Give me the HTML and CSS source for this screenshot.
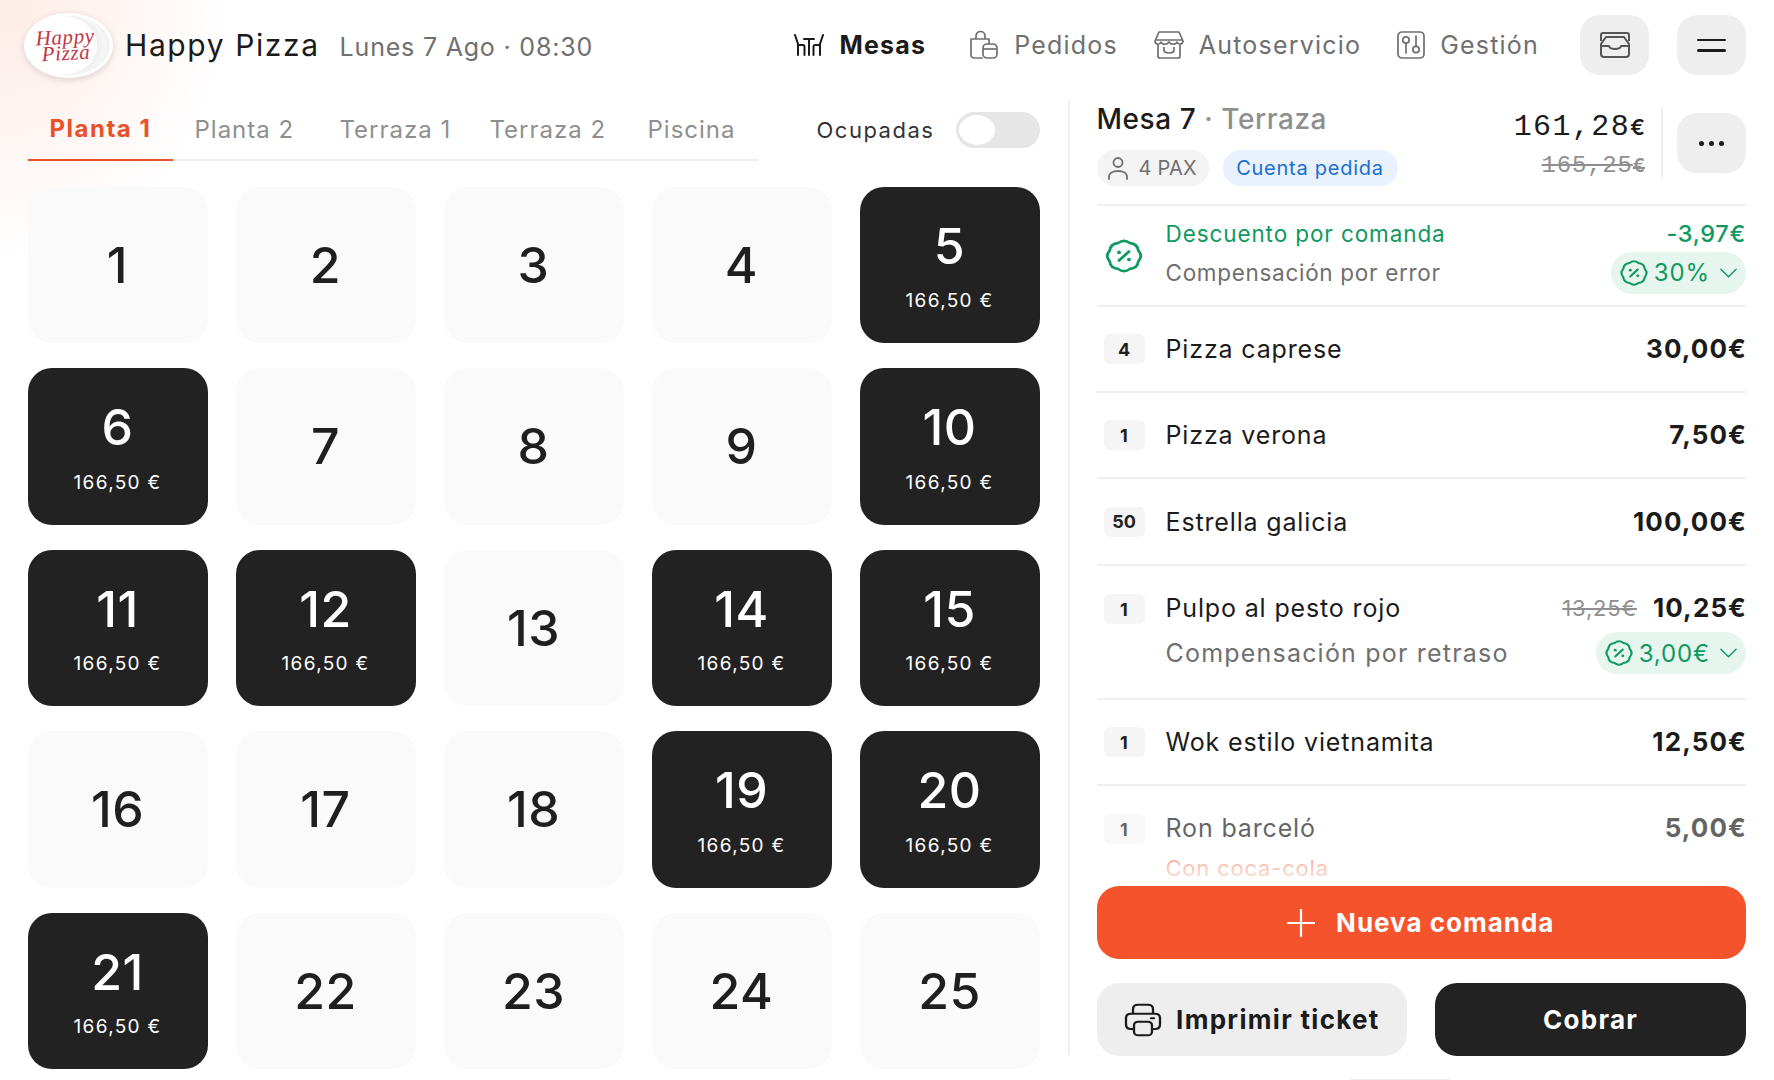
FILE: index.html
```html
<!DOCTYPE html>
<html lang="es">
<head>
<meta charset="utf-8">
<title>Happy Pizza</title>
<link rel="stylesheet" href="styles.css">
</head>
<body>
<svg class="defs" width="0" height="0" aria-hidden="true">
  <symbol id="pct" viewBox="0 0 24 24" preserveAspectRatio="none"><path d="M20.59 8.44Q23.5 12 20.59 15.56Q20.13 20.13 15.56 20.59Q12 23.5 8.44 20.59Q3.87 20.13 3.41 15.56Q.5 12 3.41 8.44Q3.87 3.87 8.44 3.41Q12 .5 15.56 3.41Q20.13 3.87 20.59 8.44Z" fill="none" stroke="currentColor" stroke-width="1.700"/><path d="M15 9L9 15" fill="none" stroke="currentColor" stroke-width="1.700" stroke-linecap="round"/><circle cx="9" cy="9.600" r="1.200" fill="currentColor"/><circle cx="15" cy="14.400" r="1.200" fill="currentColor"/></symbol>
  <symbol id="chev" viewBox="0 0 20 12"><path d="M2 2l8 8 8-8" fill="none" stroke="currentColor" stroke-width="1.500" stroke-linecap="round" stroke-linejoin="round"/></symbol>
</svg>
<div class="app">
  <header class="top">
    <div class="logo"><div class="disc"><span class="script">Happy<br>Pizza</span></div></div>
    <div class="brand">Happy Pizza</div>
    <div class="date">Lunes 7 Ago · 08:30</div>
    <nav class="nav">
      <a class="nav-item active">
        <svg class="ico-table" viewBox="0 0 32 22"><path d="M2 1l3 9v11M5 11h5c1 0 1.500 1 1.500 2v8M11 5h10M16 5v16M30 1l-3 9v11M27 11h-5c-1 0-1.500 1-1.500 2v8" fill="none" stroke="currentColor" stroke-width="2" stroke-linecap="round"/></svg>
        <span>Mesas</span>
      </a>
      <a class="nav-item">
        <svg class="ico-bag" viewBox="0 0 30 30"><path d="M13 28H5c-1.500 0-3-1.200-3-3V9h18v5M7 9V6c0-6 9-6 9 0v3" fill="none" stroke="currentColor" stroke-width="1.700" stroke-linecap="round" stroke-linejoin="round"/><rect x="14" y="14" width="14" height="14" rx="4" fill="none" stroke="currentColor" stroke-width="1.700"/><path d="M14 19h14" stroke="currentColor" stroke-width="1.700"/></svg>
        <span>Pedidos</span>
      </a>
      <a class="nav-item">
        <svg class="ico-store" viewBox="0 0 30 28"><path d="M5 1h20l4 9c0 4-5 4-6 1-1 3-6 3-8 0-2 3-7 3-8 0-1 3-6 3-6-1zM4 14v11c0 1 1 2 2 2h18c1 0 2-1 2-2V14M10 16v3c0 4 10 4 10 0v-3M1 9h28" fill="none" stroke="currentColor" stroke-width="1.700" stroke-linejoin="round"/></svg>
        <span>Autoservicio</span>
      </a>
      <a class="nav-item">
        <svg class="ico-tune" viewBox="0 0 28 28"><rect x="1" y="1" width="26" height="26" rx="4" fill="none" stroke="currentColor" stroke-width="1.700"/><circle cx="9" cy="9" r="3.200" fill="none" stroke="currentColor" stroke-width="1.700"/><path d="M9 12v10M19 5v10" stroke="currentColor" stroke-width="1.700" stroke-linecap="round"/><circle cx="19" cy="18.500" r="3.200" fill="none" stroke="currentColor" stroke-width="1.700"/></svg>
        <span>Gestión</span>
      </a>
    </nav>
    <button class="square tray" aria-label="Bandeja">
      <svg viewBox="0 0 34 26"><path d="M3 9V3c0-1 1-2 2-2h24c1 0 2 1 2 2v6M8 5h18l5 7v10c0 2-1 3-3 3H6c-2 0-3-1-3-3V12zM3 14h8c1 4 11 4 12 0h8" fill="none" stroke="currentColor" stroke-width="2" stroke-linejoin="round"/></svg>
    </button>
    <button class="square burger" aria-label="Menú"><i></i><i></i></button>
  </header>

  <main class="main">
    <section class="floor">
      <div class="tabbar">
        <div class="tabs">
          <a class="tab on">Planta 1</a>
          <a class="tab">Planta 2</a>
          <a class="tab">Terraza 1</a>
          <a class="tab">Terraza 2</a>
          <a class="tab">Piscina</a>
        </div>
        <div class="filter"><span>Ocupadas</span><div class="switch"><i></i></div></div>
      </div>
      <div class="grid">
        <div class="tile"><b>1</b></div>
        <div class="tile"><b>2</b></div>
        <div class="tile"><b>3</b></div>
        <div class="tile"><b>4</b></div>
        <div class="tile busy"><b>5</b><small>166,50 €</small></div>
        <div class="tile busy"><b>6</b><small>166,50 €</small></div>
        <div class="tile"><b>7</b></div>
        <div class="tile"><b>8</b></div>
        <div class="tile"><b>9</b></div>
        <div class="tile busy"><b>10</b><small>166,50 €</small></div>
        <div class="tile busy"><b>11</b><small>166,50 €</small></div>
        <div class="tile busy"><b>12</b><small>166,50 €</small></div>
        <div class="tile"><b>13</b></div>
        <div class="tile busy"><b>14</b><small>166,50 €</small></div>
        <div class="tile busy"><b>15</b><small>166,50 €</small></div>
        <div class="tile"><b>16</b></div>
        <div class="tile"><b>17</b></div>
        <div class="tile"><b>18</b></div>
        <div class="tile busy"><b>19</b><small>166,50 €</small></div>
        <div class="tile busy"><b>20</b><small>166,50 €</small></div>
        <div class="tile busy"><b>21</b><small>166,50 €</small></div>
        <div class="tile"><b>22</b></div>
        <div class="tile"><b>23</b></div>
        <div class="tile"><b>24</b></div>
        <div class="tile"><b>25</b></div>
      </div>
    </section>
    <div class="vline"></div>
    <aside class="panel">
      <div class="head">
        <div class="head-left">
          <div class="title">Mesa 7 <span>· Terraza</span></div>
          <div class="chips">
            <span class="chip pax"><svg viewBox="0 0 22 24"><circle cx="11" cy="6.500" r="4.500" fill="none" stroke="currentColor" stroke-width="1.800"/><path d="M2 23v-2c0-4 4-6 9-6s9 2 9 6v2" fill="none" stroke="currentColor" stroke-width="1.800" stroke-linecap="round"/></svg>4 PAX</span>
            <span class="chip status">Cuenta pedida</span>
          </div>
        </div>
        <div class="totals">
          <div class="now">161,28<em>€</em></div>
          <div class="was">165,25<em>€</em></div>
        </div>
        <button class="square more" aria-label="Más"><i></i><i></i><i></i></button>
      </div>
      <div class="list">
        <div class="row discount">
          <svg class="badge"><use href="#pct"/></svg>
          <div class="lines">
            <div class="line"><span class="green">Descuento por comanda</span><span class="green amount">-3,97€</span></div>
            <div class="line"><span class="muted">Compensación por error</span><span class="pill"><svg class="pill-pct"><use href="#pct"/></svg>30%<svg class="pill-chev"><use href="#chev"/></svg></span></div>
          </div>
        </div>
        <div class="row item"><span class="qty">4</span><span class="name">Pizza caprese</span><span class="price">30,00€</span></div>
        <div class="row item"><span class="qty">1</span><span class="name">Pizza verona</span><span class="price">7,50€</span></div>
        <div class="row item tall-fix"><span class="qty">50</span><span class="name">Estrella galicia</span><span class="price">100,00€</span></div>
        <div class="row item double">
          <span class="qty">1</span>
          <div class="lines">
            <div class="line"><span class="name">Pulpo al pesto rojo</span><span class="price"><s>13,25€</s>10,25€</span></div>
            <div class="line"><span class="muted">Compensación por retraso</span><span class="pill"><svg class="pill-pct"><use href="#pct"/></svg>3,00€<svg class="pill-chev"><use href="#chev"/></svg></span></div>
          </div>
        </div>
        <div class="row item"><span class="qty">1</span><span class="name">Wok estilo vietnamita</span><span class="price">12,50€</span></div>
        <div class="row item last">
          <span class="qty">1</span>
          <div class="lines">
            <div class="line"><span class="name">Ron barceló</span><span class="price">5,00€</span></div>
            <div class="line"><span class="note">Con coca-cola</span></div>
          </div>
        </div>
      </div>
      <button class="cta"><svg viewBox="0 0 28 28"><path d="M14 1v26M1 14h26" stroke="currentColor" stroke-width="2.200" stroke-linecap="round"/></svg>Nueva comanda</button>
      <div class="pair">
        <button class="btn print"><svg viewBox="0 0 38 38" preserveAspectRatio="none"><path d="M9 12V7c0-3 2-5 5-5h10c3 0 5 2 5 5v5M9 29H7c-3 0-5-2-5-5v-7c0-3 2-5 5-5h24c3 0 5 2 5 5v7c0 3-2 5-5 5h-2" fill="none" stroke="currentColor" stroke-width="2.300" stroke-linecap="round"/><rect x="10" y="21" width="18" height="15" rx="4" fill="none" stroke="currentColor" stroke-width="2.300"/><path d="M27 17h3" stroke="currentColor" stroke-width="2.300" stroke-linecap="round"/></svg>Imprimir ticket</button>
        <button class="btn pay">Cobrar</button>
      </div>
    </aside>
  </main>
</div>
</body>
</html>
```
FILE: styles.css
```css
* { box-sizing: border-box; }
html, body { margin: 0; padding: 0; }
body {
  width: 1774px;
  height: 1080px;
  overflow: hidden;
  position: relative;
  font-family: Inter, "Noto Sans", sans-serif;
  color: #1f1f1f;
  background:
    radial-gradient(ellipse 230px 260px at 0 0, #fdece7 0%, #fef4f1 45%, rgba(255,255,255,0) 100%),
    #fff;
}
body::after { content: ""; position: absolute; left: 1350px; bottom: 0; width: 100px; height: 1px; background: #ececec; }
.defs { position: absolute; }
.app { display: flex; flex-direction: column; height: 1080px; }

/* Header */
.top { display: flex; align-items: center; height: 90px; padding: 0 28px 0 24px; flex: none; }
.logo { width: 89px; height: 65px; margin-right: 12px; padding: 0; border-radius: 50%; background: #fff; box-shadow: 0 2px 7px rgba(0,0,0,.14); display: flex; overflow: hidden; border: 3px solid #fff; flex: none; }
.disc { width: 70px; height: 59px; border-radius: 50%; background: #fff; box-shadow: 5px 0 0 #f1f1f1, 10px 0 0 #f5f5f5, 15px 0 0 #f1f1f1; display: flex; align-items: center; justify-content: center; }
.script { font: italic 21px/16px "Liberation Serif", serif; color: #bf3645; text-align: center; letter-spacing: .6px; transform: translate(3px, 0) rotate(-3deg); }
.brand { font-size: 30px; font-weight: 400; letter-spacing: 1.600px; color: #1b1b1b; white-space: nowrap; }
.date { font-size: 25px; color: #6f6f6f; margin-left: 20px; margin-top: 3px; letter-spacing: .8px; white-space: nowrap; }
.nav { display: flex; align-items: center; margin-left: auto; gap: 36px; margin-right: 41px; }
.nav-item { display: flex; align-items: center; gap: 15px; font-size: 25px; color: #6f6f6f; letter-spacing: 1.200px; white-space: nowrap; }
.nav-item.active { color: #1b1b1b; font-weight: 700; margin-right: 7px; gap: 14px; }
.ico-table { width: 32px; height: 22px; }
.ico-bag { width: 30px; height: 30px; }
.ico-store { width: 30px; height: 28px; }
.ico-tune { width: 28px; height: 28px; }
.square { border: 0; padding: 0; width: 69px; height: 60px; border-radius: 20px; background: #eeeeee; color: #555; display: flex; align-items: center; justify-content: center; flex: none; }
.tray svg { width: 34px; height: 26px; }
.burger { margin-left: 28px; flex-direction: column; gap: 8px; }
.burger i { display: block; width: 29px; height: 2.500px; background: #1b1b1b; border-radius: 2px; }

/* Layout */
.main { display: flex; flex: 1; min-height: 0; }
.floor { width: 1067.500px; padding: 0 27.500px; flex: none; }
.vline { width: 2px; margin: 10px 0 25px; background: #f0f0f0; flex: none; }
.panel { flex: 1; padding: 0 28px 24px 27px; display: flex; flex-direction: column; min-width: 0; }

/* Tabs */
.tabbar { display: flex; align-items: stretch; height: 71px; }
.tabs { display: grid; grid-template-columns: 145px 145px 150px 158px 132px; width: 730px; border-bottom: 2px solid #eeeeee; }
.tab { padding: 7px 0 0 22px; height: 71px; margin-bottom: -2px; display: flex; align-items: center; font-size: 24px; color: #8f8f8f; letter-spacing: 1px; white-space: nowrap; }
.tab.on { color: #e9512b; font-weight: 700; border-bottom: 2px solid #e9512b; padding-left: 22px; letter-spacing: 1.500px; }
.filter { flex: 1; display: flex; align-items: center; justify-content: space-between; padding-left: 59px; padding-top: 8px; font-size: 22px; color: #333; letter-spacing: 1.500px; }
.switch { width: 84px; height: 36px; border-radius: 18px; background: #e6e6e6; padding: 3px; flex: none; }
.switch i { display: block; width: 36px; height: 30px; border-radius: 50%; background: #fff; }

/* Tiles */
.grid { display: grid; grid-template-columns: repeat(5, 180px); grid-auto-rows: 156.500px; gap: 25px 28px; margin-top: 25.500px; }
.tile { border-radius: 24px; background: #fafafa; display: flex; flex-direction: column; align-items: center; justify-content: center; gap: 14.500px; color: #1f1f1f; }
.tile b { font-size: 50px; line-height: 58px; font-weight: 500; letter-spacing: .5px; }
.tile small { font-size: 19px; line-height: 24px; letter-spacing: 1.300px; }
.tile.busy { background: #222222; color: #fff; }

/* Panel head */
.head { display: flex; align-items: flex-start; height: 116px; border-bottom: 2px solid #efefef; flex: none; }
.head-left { flex: 1; padding-top: 12px; }
.title { font-size: 28px; line-height: 34px; font-weight: 500; color: #1b1b1b; letter-spacing: .55px; white-space: nowrap; }
.title span { color: #8f8f8f; }
.chips { display: flex; gap: 14px; margin-top: 14px; }
.chip { height: 36px; border-radius: 18px; display: flex; align-items: center; font-size: 20px; letter-spacing: .2px; white-space: nowrap; }
.pax { width: 112px; padding-left: 10px; gap: 10px; background: #f4f4f4; color: #707070; }
.pax svg { width: 22px; height: 24px; }
.status { width: 175px; justify-content: center; background: #e8f1fc; color: #1a6fd0; letter-spacing: .75px; }
.totals { width: 150px; height: 71px; margin-top: 17px; padding-right: 16px; text-align: right; border-right: 2px solid #f0f0f0; font-family: "Liberation Mono", monospace; white-space: nowrap; }
.now { font-size: 30px; line-height: 38px; color: #1b1b1b; margin-top: 1px; letter-spacing: 1.400px; margin-left: -20px; }
.was { font-size: 24px; line-height: 30px; color: #8f8f8f; margin-top: 5px; letter-spacing: .8px; text-decoration: line-through; }
.now em, .was em { font-style: normal; font-family: Inter, sans-serif; font-weight: 600; font-size: 22px; letter-spacing: 0; }
.was em { font-size: 18px; }
.more { margin-top: 23px; margin-left: 14px; gap: 5px; color: #1b1b1b; }
.more i { width: 5px; height: 5px; border-radius: 50%; background: #1b1b1b; }

/* List */
.list { flex: 1; min-height: 0; overflow: hidden; position: relative; }
.list::after { content: ""; position: absolute; left: 0; right: 0; bottom: 0; height: 46px; background: linear-gradient(to bottom, rgba(255,255,255,0), rgba(255,255,255,.85)); }
.row { display: flex; align-items: center; border-bottom: 2px solid #efefef; font-size: 25px; }
.item { height: 86px; padding-left: 7px; }
.tall-fix { height: 87px; }
.discount { height: 101px; padding-left: 7px; }
.badge { width: 40px; height: 36px; color: #0f9960; margin-right: 22px; flex: none; }
.lines { flex: 1; display: flex; flex-direction: column; min-width: 0; }
.line { display: flex; justify-content: space-between; align-items: center; }
.discount .line:first-child { height: 36px; }
.discount .line:last-child { height: 42px; }
.discount .lines { margin-top: -2px; }
.green { color: #0f9960; font-size: 22.500px; letter-spacing: .9px; }
.amount { font-weight: 500; font-size: 23.500px; letter-spacing: .7px; }
.muted { color: #6f6f6f; font-size: 22.500px; letter-spacing: .7px; white-space: nowrap; }
.double .muted { font-size: 25px; letter-spacing: 1.200px; }
.pill { height: 42px; border-radius: 21px; background: #e7f5ef; color: #0f9960; font-size: 24px; letter-spacing: .9px; display: flex; align-items: center; padding: 0 8px 0 8px; white-space: nowrap; }
.pill-pct { width: 30px; height: 28px; margin-right: 5px; flex: none; }
.pill-chev { width: 19px; height: 12px; margin-left: 9px; flex: none; }
.qty { width: 41px; height: 30px; border-radius: 6px; background: #f5f5f5; font-size: 18px; font-weight: 700; display: flex; align-items: center; justify-content: center; margin-right: 21px; flex: none; color: #1f1f1f; }
.name { flex: 1; font-size: 25px; letter-spacing: .85px; color: #1b1b1b; white-space: nowrap; }
.price { font-size: 26px; font-weight: 700; letter-spacing: 1.100px; color: #1b1b1b; display: flex; align-items: center; gap: 16px; white-space: nowrap; margin-right: -1px; margin-top: -1px; }
.price s { font-weight: 400; font-size: 22px; letter-spacing: .8px; color: #8f8f8f; }
.double { height: 134px; align-items: flex-start; padding-top: 26px; }
.double .qty { margin-top: 2px; }
.double .line:first-child { height: 32px; }
.double .line:last-child { margin-top: 8px; }
.last { height: 120px; align-items: flex-start; padding-top: 26px; border-bottom: 0; opacity: .68; }
.last .qty { margin-top: 2px; }
.last .line:first-child { height: 32px; }
.note { color: #f5532b; font-size: 22px; margin-top: 11px; letter-spacing: .8px; }

/* Actions */
.cta { flex: none; height: 73px; border: 0; border-radius: 22px; background: #f5532b; color: #fff; font: 700 26px Inter, sans-serif; letter-spacing: 1px; display: flex; align-items: center; justify-content: center; gap: 21px; padding-left: 5px; }
.cta svg { width: 28px; height: 28px; }
.pair { flex: none; display: flex; gap: 28px; margin-top: 24px; }
.btn { flex: 1; height: 73px; border: 0; border-radius: 22px; font: 700 26px Inter, sans-serif; letter-spacing: 1.300px; display: flex; align-items: center; justify-content: center; }
.print { background: #eeeeee; color: #1b1b1b; gap: 14px; }
.print svg { width: 38px; height: 34px; }
.pay { background: #222222; color: #fff; }
```
